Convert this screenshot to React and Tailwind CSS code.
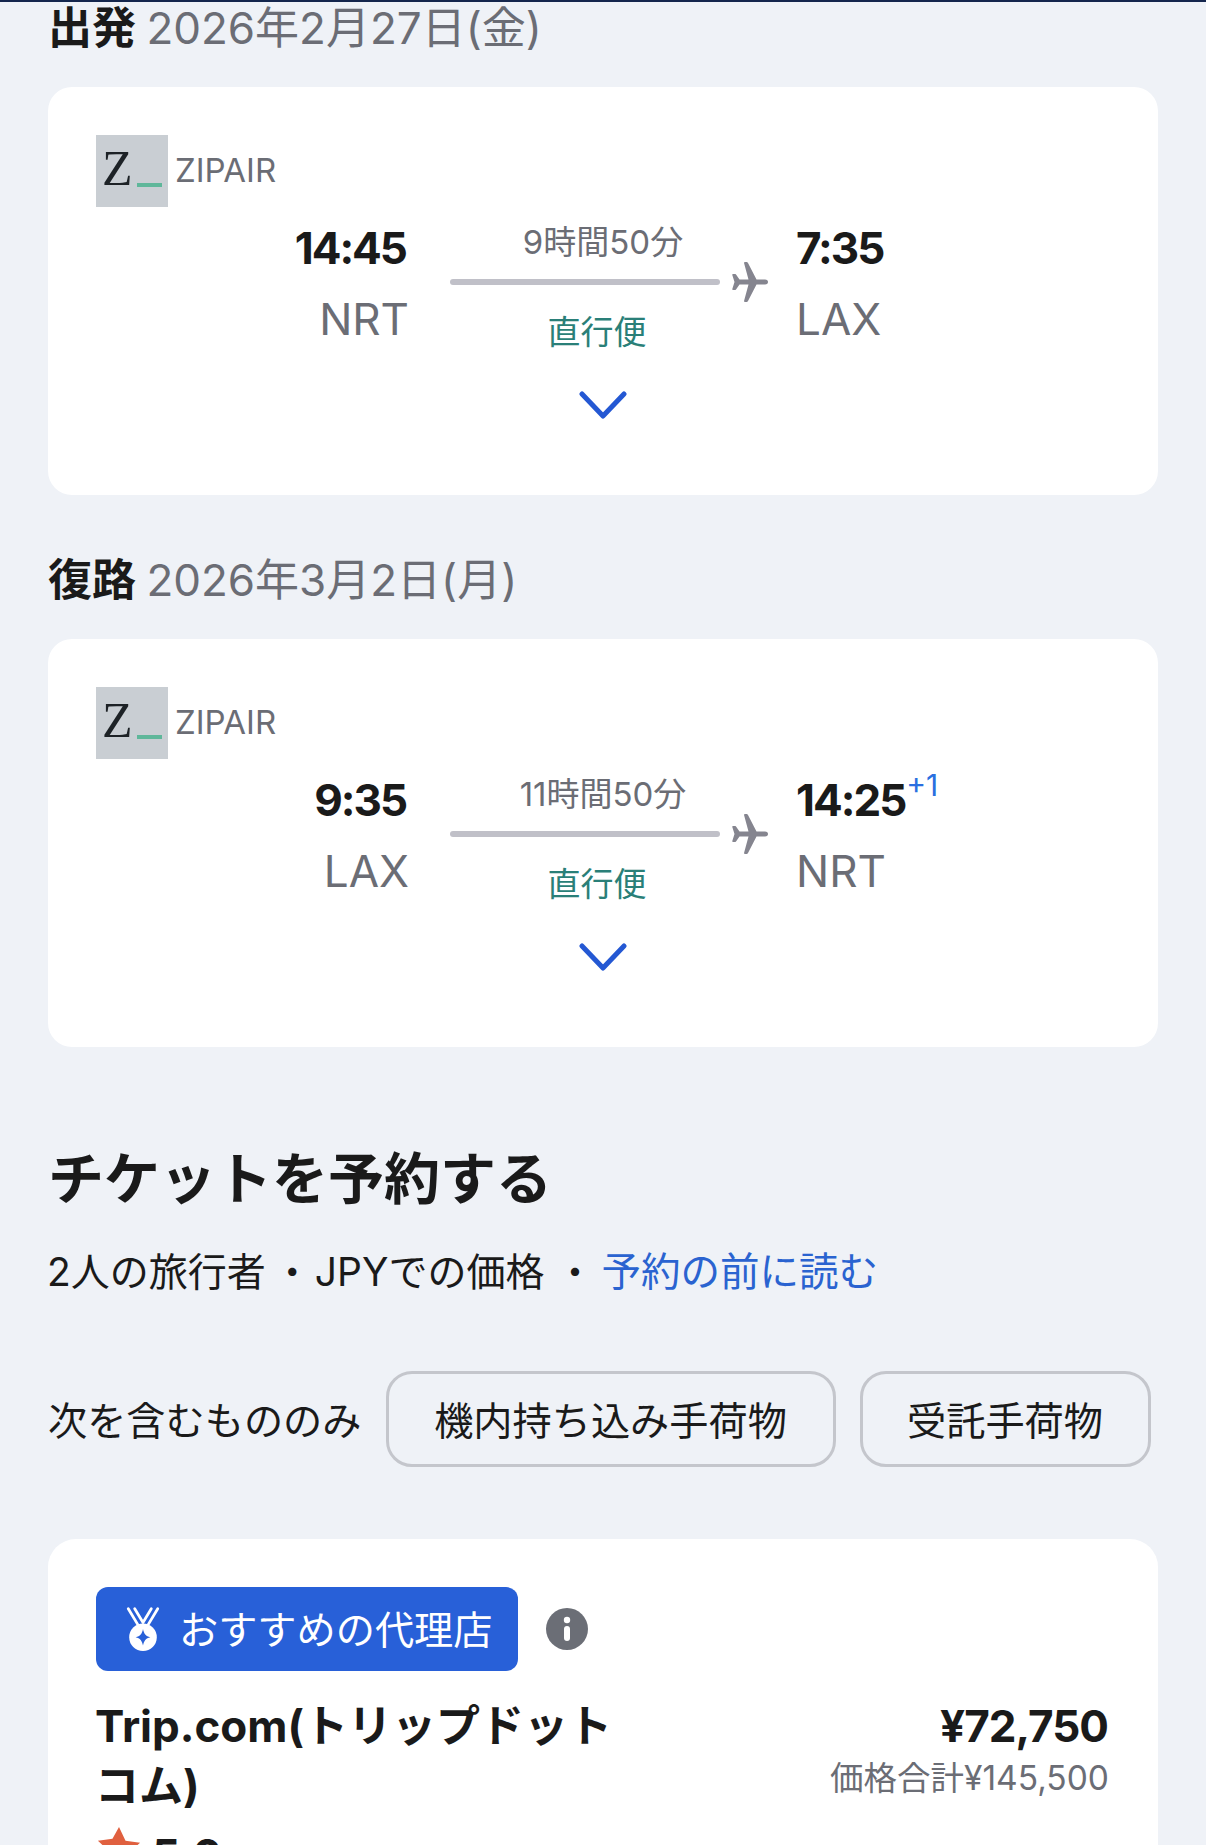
import React from 'react';

const sans = "font-['Inter','Noto_Sans_CJK_JP',sans-serif]";

const PlaneIcon = () => (
  <svg viewBox="0 0 36 40" className="h-[40px] w-[36px] text-[#85858f]" fill="currentColor">
    <path d="M36 20c0-1.5-1-2.5-3-2.5h-8.5L16 1c-.4-.8-1-1-1.6-1H13c-.8 0-1.1.5-.9 1.2l4.4 16.3H7.5L4 12.6c-.4-.5-.8-.6-1.2-.6H1c-.6 0-.9.4-.7 1L2.5 20 .3 27c-.2.6.1 1 .7 1h1.8c.4 0 .8-.1 1.2-.6l3.5-4.9h9l-4.4 16.3c-.2.7.1 1.2.9 1.2h1.4c.6 0 1.2-.2 1.6-1l8.5-16.5H33c2 0 3-1 3-2.5z" />
  </svg>
);

const Chevron = () => (
  <svg viewBox="0 0 48 28" className="h-[28px] w-[48px] text-[#2458d3]" fill="none" stroke="currentColor" strokeWidth="5" strokeLinecap="round" strokeLinejoin="round">
    <path d="M3 3l21 22L45 3" />
  </svg>
);

const ZipairLogo = () => (
  <div className="relative h-[72px] w-[72px] bg-[#c9ced3]">
    <span className="absolute left-[6px] top-[5px] font-['Liberation_Serif',serif] text-[50px] leading-[56px] text-[#1d2226]">Z</span>
    <span className="absolute left-[41px] top-[48px] h-[4px] w-[25px] bg-[#5fb79a]" />
  </div>
);

const FlightCard = ({ depart, from, duration, arrive, to, plusDay }) => (
  <div className="h-[408px] rounded-[24px] bg-white px-[48px] pt-[48px]">
    <div className="flex items-center gap-[7px]">
      <ZipairLogo />
      <span className="-mt-[1px] text-[33px] text-[#6b6d75]">ZIPAIR</span>
    </div>
    <div className="mt-[13px] grid grid-cols-[311px_361px_1fr]">
      <div className="text-right">
        <div className="pr-[1px] text-[44px] leading-[56px] font-bold tracking-[-2px] text-[#1a1a1a]">{depart}</div>
        <div className="mt-[15px] -mr-[2px] text-[44px] leading-[56px] text-[#6b6d75]">{from}</div>
      </div>
      <div className="ml-[43px]">
        <div className="pr-[12px] text-center text-[33px] leading-[44px] text-[#6b6d75]">{duration}</div>
        <div className="relative mt-[15px] h-[6px] w-[270px] rounded-full bg-[#c0c0c8]">
          <div className="absolute left-[282px] top-[-17px]">
            <PlaneIcon />
          </div>
        </div>
        <div className="mt-[25px] pr-[24px] text-center text-[33px] leading-[44px] text-[#2a7f78]">直行便</div>
      </div>
      <div className="ml-[28px]">
        <div className="text-[44px] leading-[56px] font-bold tracking-[-2px] text-[#1a1a1a]">
          {arrive}
          {plusDay && <span className="relative top-[-20px] ml-[1px] text-[30px] leading-none font-normal tracking-normal text-[#2a6fe0]">{plusDay}</span>}
        </div>
        <div className="mt-[15px] text-[44px] leading-[56px] text-[#6b6d75]">{to}</div>
      </div>
    </div>
    <div className="mt-[37px] flex justify-center">
      <Chevron />
    </div>
  </div>
);

const MedalIcon = () => (
  <svg viewBox="0 0 38 50" className="h-[46px] w-[38px]">
    <g fill="none" stroke="#fff" strokeWidth="3" strokeLinecap="round">
      <path d="M3 3l12 20M10 3l9 15M35 3L23 23M28 3l-9 15" />
    </g>
    <circle cx="19" cy="34" r="15" fill="#fff" />
    <path d="M19 25c1 5 3 8 8 9-5 1-7 4-8 9-1-5-3-8-8-9 5-1 7-4 8-9z" fill="#2860d8" />
  </svg>
);

export default function App() {
  return (
    <div className={`${sans} h-[1845px] w-[1206px] overflow-hidden bg-[#eff2f7]`}>
      <div className="h-[2px] bg-[#14264d]" />

      <div className="px-[48px]">
        <h2 className="mb-[33px] text-[44px] leading-[52px] text-[#6b6d75]">
          <span className="mr-[-2px] font-bold text-[#1a1a1a]">出発</span> 2026年2月27日(金)
        </h2>
        <FlightCard depart="14:45" from="NRT" duration="9時間50分" arrive="7:35" to="LAX" />

        <h2 className="mt-[59px] mb-[33px] text-[44px] leading-[52px] text-[#6b6d75]">
          <span className="mr-[-2px] font-bold text-[#1a1a1a]">復路</span> 2026年3月2日(月)
        </h2>
        <FlightCard depart="9:35" from="LAX" duration="11時間50分" arrive="14:25" to="NRT" plusDay="+1" />

        {/* Booking section */}
        <h1 className="mt-[96px] text-[56px] leading-[72px] font-bold text-[#1a1a1a]">チケットを予約する</h1>
        <p className="mt-[32px] -ml-[1px] flex text-[39px] leading-[50px] text-[#1a1a1a]">
          <span>2人の旅行者</span>
          <span className="ml-[7px] mr-[3px]">・</span>
          <span>JPYでの価格</span>
          <span className="ml-[11px] mr-[7px]">・</span>
          <a href="#" className="text-[39.5px] text-[#2a63d0]">予約の前に読む</a>
        </p>
        <div className="mt-[74px] flex items-center">
          <span className="mt-[5px] text-[39.2px] text-[#1a1a1a]">次を含むもののみ</span>
          <button className="ml-[24px] h-[96px] w-[450px] rounded-[26px] border-[3px] border-[#c4c6cc] pt-[5px] text-[39.2px] text-[#1a1a1a]">機内持ち込み手荷物</button>
          <button className="ml-[24px] h-[96px] w-[291px] rounded-[26px] border-[3px] border-[#c4c6cc] pt-[5px] text-[39.2px] text-[#1a1a1a]">受託手荷物</button>
        </div>

        <div className="mt-[72px] h-[500px] rounded-[28px] bg-white px-[48px] pt-[48px]">
          <div className="flex items-center">
            <div className="flex h-[84px] w-[422px] items-center gap-[17px] rounded-[12px] bg-[#2860d8] pl-[28px] text-[39.2px] text-white">
              <MedalIcon />
              <span className="pt-[2px]">おすすめの代理店</span>
            </div>
            <svg viewBox="0 0 42 42" className="ml-[28px] h-[42px] w-[42px]">
              <circle cx="21" cy="21" r="21" fill="#6b6e76" />
              <circle cx="21" cy="12" r="3.2" fill="#fff" />
              <rect x="18" y="18" width="6" height="15" rx="3" fill="#fff" />
            </svg>
          </div>
          <div className="mt-[25px] flex justify-between">
            <div className="-ml-[1px] w-[530px] text-[44px] leading-[60px] font-bold text-[#1a1a1a]">
              Trip.com(トリップドットコム)
            </div>
            <div className="pr-[2px] text-right">
              <div className="text-[44px] leading-[60px] font-bold tracking-[-1px] text-[#1a1a1a]">¥72,750</div>
              <div className="-mr-[1px] text-[33.5px] leading-[44px] text-[#6b6d75]">価格合計¥145,500</div>
            </div>
          </div>
          <div className="mt-[3px] flex items-center gap-[10px]">
            <svg viewBox="0 0 24 24" className="mb-[14px] h-[46px] w-[46px] text-[#e0603f]" fill="currentColor">
              <path d="M12 1l3.4 7.2 7.6 1-5.6 5.3 1.5 7.7L12 17.3l-6.9 3.9 1.5-7.7L1 8.2l7.6-1z" />
            </svg>
            <span className="text-[44px] leading-[60px] font-bold text-[#1a1a1a]">5.0</span>
            <span className="mt-[12px] text-[30px] leading-[60px] text-[#6b6d75]">件 8,000</span>
          </div>
        </div>
      </div>
    </div>
  );
}
